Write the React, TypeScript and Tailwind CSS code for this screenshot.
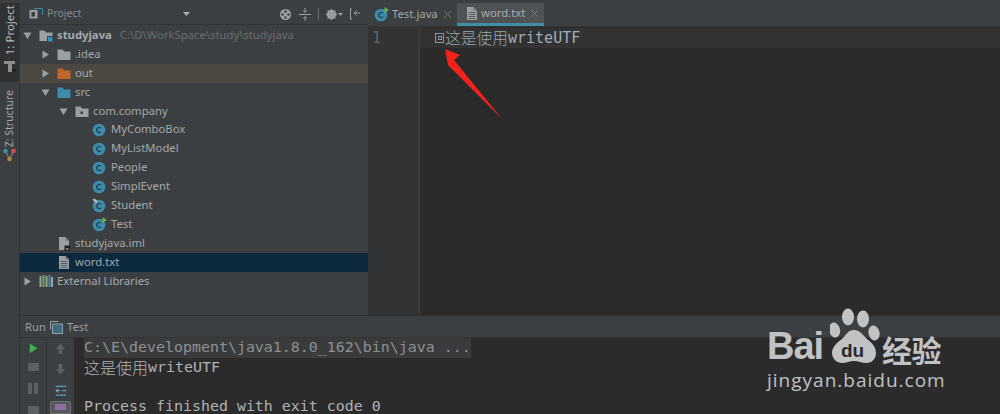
import React from "react";

const UI = { fontFamily: '"Noto Sans", "Open Sans", sans-serif' };
const MONO = { fontFamily: '"DejaVu Sans Mono", "Noto Sans CJK SC", monospace' };
const CJK = { fontFamily: '"Noto Sans CJK SC", sans-serif' };

function Arrow({ open }: { open?: boolean }) {
  return (
    <svg width="9" height="9" viewBox="0 0 9 9" className="shrink-0">
      {open ? <polygon points="0.5,1.5 8.5,1.5 4.5,8" fill="#9da0a2" /> : <polygon points="1.5,0.5 8,4.5 1.5,8.5" fill="#9da0a2" />}
    </svg>
  );
}

function Folder({ color, dot, badge }: { color: string; dot?: boolean; badge?: boolean }) {
  return (
    <svg width="14" height="13" viewBox="0 0 14 13" className="shrink-0">
      <path d="M0.5 1.5h5l1.5 2h6.5v8.5h-13z" fill={color} />
      {dot && <rect x="5.5" y="6.5" width="2.5" height="2.5" fill="#3c3f41" />}
      {badge && <rect x="8.5" y="7.5" width="5.5" height="5.5" fill="#3592c4" stroke="#3c3f41" />}
    </svg>
  );
}

function ClassIcon({ pin, run }: { pin?: boolean; run?: boolean }) {
  return (
    <svg width="15" height="15" viewBox="0 0 15 15" className="shrink-0">
      <circle cx="7" cy="8" r="6.3" fill="#3e8cab" />
      <path d="M9 6.2a2.5 2.5 0 1 0 0 3.6" fill="none" stroke="#1f4757" strokeWidth="1.3" />
      {pin && <path d="M0.5 1.5l2-1 3.5 3-2 2z" fill="#b4b8ba" />}
      {run && <polygon points="10.5,0 15,3 10.5,6" fill="#6ab04a" />}
    </svg>
  );
}

function FileIcon({ badge }: { badge?: boolean }) {
  return (
    <svg width="12" height="15" viewBox="0 0 12 15" className="shrink-0">
      <path d="M1 1h6.5l3.5 3.5V14H1z" fill="#9aa0a4" />
      <path d="M7.5 1v3.5H11" fill="#6f7579" />
      {!badge && <path d="M2.5 6.5h7M2.5 8.5h7M2.5 10.5h7M2.5 12.5h7" stroke="#50565a" strokeWidth="0.9" />}
      {badge && <rect x="6.5" y="9.5" width="5.5" height="5.5" fill="#222" />}
      {badge && <rect x="8" y="12.5" width="2.5" height="1" fill="#ddd" />}
    </svg>
  );
}

function Row({ indent, arrow, icon, label, extra, bold, className }: {
  indent: number; arrow?: "open" | "closed"; icon: React.ReactNode; label: string; extra?: string; bold?: boolean; className?: string;
}) {
  return (
    <div className={`flex h-[18.9px] items-center ${className ?? ""}`}>
      <div className="flex w-[14px] shrink-0 justify-center" style={{ marginLeft: indent }}>
        {arrow && <Arrow open={arrow === "open"} />}
      </div>
      <div className="ml-[4px] flex w-[15px] shrink-0 justify-center">{icon}</div>
      <span className={`ml-[4px] text-[11.3px] whitespace-nowrap text-[#a3a9ac] ${bold ? "font-bold" : ""}`}>{label}</span>
      {extra && <span className="ml-[8px] text-[11.3px] whitespace-nowrap text-[#696e71]">{extra}</span>}
    </div>
  );
}

function Rail() {
  return (
    <div className="flex w-[20px] shrink-0 flex-col border-r border-[#323436] bg-[#3c3f41]" style={UI}>
      <div className="flex h-[79px] w-[19px] flex-col items-center justify-end bg-[#2f3133] pb-[10px]">
        <span className="text-[11.5px] leading-[19px] whitespace-nowrap text-[#b5b8ba] [writing-mode:vertical-rl] rotate-180">1: Project</span>
        <svg width="12" height="12" viewBox="0 0 12 12" className="mt-[5px]">
          <path d="M0 1h11v3H8v8H4V4H0z" fill="#8a8e91" />
          <rect x="8" y="9" width="4" height="3" fill="#222" />
        </svg>
      </div>
      <div className="mt-[8px] flex w-[19px] flex-col items-center">
        <span className="text-[10.5px] leading-[19px] whitespace-nowrap text-[#a3a7a9] [writing-mode:vertical-rl] rotate-180">Z: Structure</span>
        <svg width="13" height="14" viewBox="0 0 13 14" className="mt-[1px]">
          <path d="M2.5 3L6.5 11L10.5 3" stroke="#8a8e91" fill="none" />
          <circle cx="2.5" cy="3" r="2.3" fill="#3e8cab" />
          <circle cx="10.5" cy="3" r="2.3" fill="#c75450" />
          <circle cx="6.5" cy="11" r="2.3" fill="#b5803c" />
        </svg>
      </div>
    </div>
  );
}

function ProjectPanel() {
  return (
    <div className="flex w-[348px] shrink-0 flex-col bg-[#3c3f41]" style={UI}>
      <div className="flex h-[22px] items-center border-b border-[#323436] pl-[9px] pt-[1px]">
        <svg width="14" height="12" viewBox="0 0 14 12">
          <rect x="0.5" y="2" width="8" height="8.5" fill="#9aa0a4" />
          <rect x="2.5" y="4" width="3.5" height="4.5" fill="#3c3f41" />
          <path d="M5 0.5h8.5V7" stroke="#3e8cab" fill="none" />
        </svg>
        <span className="ml-[4px] text-[10.5px] text-[#888c8f]">Project</span>
        <svg width="7" height="4" viewBox="0 0 7 4" className="ml-[102px]"><polygon points="0,0 7,0 3.5,4" fill="#a9adaf" /></svg>
        <div className="ml-[89px] flex items-center">
          <svg width="13" height="13" viewBox="0 0 13 13">
            <circle cx="6.5" cy="6.5" r="5.5" fill="#9da0a2" />
            <circle cx="6.5" cy="3.5" r="1.2" fill="#3c3f41" /><circle cx="6.5" cy="9.5" r="1.2" fill="#3c3f41" />
            <circle cx="3.5" cy="6.5" r="1.2" fill="#3c3f41" /><circle cx="9.5" cy="6.5" r="1.2" fill="#3c3f41" />
          </svg>
          <svg width="12" height="13" viewBox="0 0 12 13" className="ml-[7px]">
            <path d="M0 6.5h12" stroke="#9da0a2" /><path d="M6 0v4M6 9v4M4 2.5l2 2 2-2M4 10.5l2-2 2 2" stroke="#9da0a2" fill="none" />
          </svg>
          <div className="ml-[7px] h-[12px] w-px bg-[#6a6d70]" />
          <svg width="11" height="11" viewBox="0 0 11 11" className="ml-[7px]">
            <circle cx="5.5" cy="5.5" r="3.4" fill="none" stroke="#9da0a2" strokeWidth="2.4" />
            <path d="M5.5 0v11M0 5.5h11M1.6 1.6l7.8 7.8M9.4 1.6l-7.8 7.8" stroke="#9da0a2" strokeWidth="1.4" />
          </svg>
          <svg width="5" height="3" viewBox="0 0 5 3" className="ml-[1px]"><polygon points="0,0 5,0 2.5,3" fill="#9da0a2" /></svg>
          <svg width="12" height="12" viewBox="0 0 12 12" className="ml-[6px]">
            <path d="M1.5 1v10M1 1h2M1 11h2" stroke="#9da0a2" fill="none" /><path d="M11 5H5M7.5 2.5L5 5l2.5 2.5" stroke="#9da0a2" fill="none" />
          </svg>
        </div>
      </div>
      <div className="pt-[1px]">
        <Row indent={0} arrow="open" icon={<Folder color="#9aa0a4" badge />} label="studyjava" bold extra="C:\D\WorkSpace\study\studyjava" />
        <Row indent={18} arrow="closed" icon={<Folder color="#9aa0a4" />} label=".idea" />
        <Row indent={18} arrow="closed" icon={<Folder color="#c3662c" />} label="out" className="bg-[#4b4841]" />
        <Row indent={18} arrow="open" icon={<Folder color="#3e8cab" />} label="src" />
        <Row indent={36} arrow="open" icon={<Folder color="#9aa0a4" dot />} label="com.company" />
        <Row indent={54} icon={<ClassIcon />} label="MyComboBox" />
        <Row indent={54} icon={<ClassIcon />} label="MyListModel" />
        <Row indent={54} icon={<ClassIcon />} label="People" />
        <Row indent={54} icon={<ClassIcon />} label="SimplEvent" />
        <Row indent={54} icon={<ClassIcon pin />} label="Student" />
        <Row indent={54} icon={<ClassIcon run />} label="Test" />
        <Row indent={18} icon={<FileIcon badge />} label="studyjava.iml" />
        <Row indent={18} icon={<FileIcon />} label="word.txt" className="bg-[#0d293e]" />
        <Row indent={0} arrow="closed" label="External Libraries" icon={
          <svg width="14" height="12" viewBox="0 0 14 12">
            <rect x="0.5" y="1" width="2" height="11" fill="#9aa0a4" />
            <rect x="3.5" y="0" width="2" height="12" fill="#6ab04a" />
            <rect x="6.5" y="1" width="2" height="11" fill="#9aa0a4" />
            <rect x="9.5" y="0" width="2" height="12" fill="#3e8cab" />
            <rect x="12" y="2" width="2" height="10" fill="#9aa0a4" />
          </svg>
        } />
      </div>
    </div>
  );
}

function Tab({ active, icon, label, width, inset }: { active?: boolean; icon: React.ReactNode; label: string; width: number; inset: number }) {
  return (
    <div className={`flex h-[23px] items-center ${active ? "border-b-[3px] border-[#3f8ea6] bg-[#4e5254]" : ""}`} style={{ ...UI, width, paddingLeft: inset }}>
      {icon}
      <span className={`ml-[3px] text-[11.3px] whitespace-nowrap ${active ? "text-[#a9adb0]" : "text-[#a3a7a9]"}`}>{label}</span>
      <svg width="7" height="7" viewBox="0 0 7 7" className="ml-[6px]"><path d="M0 0l7 7M7 0L0 7" stroke="#74787b" /></svg>
    </div>
  );
}

function Editor() {
  return (
    <div className="flex min-w-0 flex-1 flex-col bg-[#2b2b2b]">
      <div className="flex h-[24px] items-end border-b border-[#323436] bg-[#3c3f41] pl-[5px]">
        <Tab width={84} inset={1} label="Test.java" icon={<ClassIcon run />} />
        <Tab active width={87} inset={9} label="word.txt" icon={<FileIcon />} />
      </div>
      <div className="flex flex-1">
        <div className="w-[52px] shrink-0 border-r border-[#3f4143] bg-[#313335] pl-[4px] pt-[1px] text-[15px] leading-[20px] text-[#606366]" style={MONO}>1</div>
        <div className="flex-1 pt-[1px]">
          <div className="flex h-[20px] items-center bg-[#323232] pl-[15px] text-[15px] leading-[20px] whitespace-nowrap text-[#9fadba]" style={MONO}>
            <span className="mr-[1px] flex h-[10px] w-[9px] items-center justify-center border border-[#8a97a3]"><span className="h-[4px] w-[4px] border border-[#8a97a3]" /></span>
            <span className="text-[15.75px] font-light text-[#98a5b1]" style={CJK}>这是使用</span>
            <span>writeUTF</span>
          </div>
        </div>
      </div>
    </div>
  );
}

function RunPanel() {
  return (
    <div className="flex h-[99px] shrink-0 flex-col border-t border-[#2d2f30] bg-[#3c3f41]">
      <div className="flex h-[22px] shrink-0 items-center border-b border-[#323436] pl-[5px] pt-[1px]" style={UI}>
        <span className="text-[11.3px] text-[#9a9ea1]">Run</span>
        <svg width="13" height="13" viewBox="0 0 13 13" className="ml-[4px]">
          <path d="M0.5 0.5h8" stroke="#9aa0a4" /><path d="M0.5 0.5v8" stroke="#9aa0a4" />
          <rect x="2.5" y="3" width="10" height="9.5" fill="#3e6b80" stroke="#8fa0aa" />
        </svg>
        <span className="ml-[4px] text-[11.3px] text-[#9a9ea1]">Test</span>
      </div>
      <div className="flex min-h-0 flex-1">
        <div className="flex w-[27px] shrink-0 flex-col items-center border-r border-[#323436] pt-[5px]">
          <svg width="11" height="14" viewBox="0 0 11 14"><polygon points="0.5,0.5 10.5,7 0.5,13.5" fill="#3fb34f" /></svg>
          <div className="mt-[9px] h-[11px] w-[11px] bg-[#5e6163]" />
          <div className="mt-[12px] flex gap-[2px]"><div className="h-[11px] w-[4px] bg-[#5e6163]" /><div className="h-[11px] w-[4px] bg-[#5e6163]" /></div>
          <div className="mt-[12px] h-[11px] w-[11px] bg-[#5e6163]" />
        </div>
        <div className="flex w-[27px] shrink-0 flex-col items-center pt-[6px]">
          <svg width="11" height="12" viewBox="0 0 11 12"><path d="M5.5 0L11 6H7.5v6h-4V6H0z" fill="#5e6163" /></svg>
          <svg width="11" height="12" viewBox="0 0 11 12" className="mt-[10px]"><path d="M5.5 12L11 6H7.5V0h-4v6H0z" fill="#5e6163" /></svg>
          <svg width="14" height="13" viewBox="0 0 14 13" className="mt-[10px]">
            <path d="M1 1.5h12M1 6.5h5M8 6.5h5M1 11.5h12" stroke="#4f9ec4" strokeWidth="1.4" />
            <path d="M4 4.5L1.5 6.5 4 8.5" stroke="#b0b4b6" fill="none" />
          </svg>
          <div className="mt-[5px] flex h-[14px] w-[21px] justify-center rounded-t-[2px] border border-[#6d7073] bg-[#55585a] pt-[2px]"><div className="h-[6px] w-[11px] bg-[#8f6fa8]" /></div>
        </div>
        <div className="min-w-0 flex-1 bg-[#2b2b2b] pl-[10px] text-[14.95px] leading-[19.7px] whitespace-pre text-[#b0b3b5]" style={MONO}>
          <div className="w-max bg-[#3a3b3c] text-[#8d9194]">{"C:\\E\\development\\java1.8.0_162\\bin\\java ..."}</div>
          <div className="flex h-[19.7px] items-center"><span className="text-[16px] font-light" style={CJK}>这是使用</span><span>writeUTF</span></div>
          <div className="h-[19.7px]" />
          <div>Process finished with exit code 0</div>
        </div>
      </div>
    </div>
  );
}

function Watermark() {
  return (
    <div className="absolute left-[767px] top-[307px] text-[#c0c2c3]" style={UI}>
      <div className="relative h-[63px] w-[180px]">
        <span className="absolute left-[0px] top-[15px] text-[38px] leading-[48px] font-bold tracking-[-1px]" style={{ fontFamily: '"Liberation Sans", sans-serif' }}>Bai</span>
        <svg width="50" height="58" viewBox="0 0 50 58" className="absolute left-[63px] top-[0px]">
          <ellipse cx="18" cy="10" rx="6" ry="8.5" fill="#c0c2c3" />
          <ellipse cx="33" cy="12" rx="6" ry="8.5" fill="#c0c2c3" />
          <ellipse cx="4.5" cy="23" rx="5.5" ry="7.5" fill="#c0c2c3" transform="rotate(-15 4.5 23)" />
          <ellipse cx="44" cy="26" rx="5.5" ry="7.5" fill="#c0c2c3" transform="rotate(-15 44 26)" />
          <path d="M24 23c-6 0-8 5-12 9-6 4-10 9-10 14 0 6 5 10 10 10 4 0 8-2 12-2s8 2 12 2c6 0 10-4 10-10 0-6-4-10-9-14-4-4-7-9-13-9z" fill="#c0c2c3" />
        </svg>
        <span className="absolute left-[74px] top-[33px] text-[19px] leading-[22px] font-bold text-[#2b2b2b]" style={{ fontFamily: '"Liberation Sans", sans-serif' }}>du</span>
        <span className="absolute left-[115px] top-[28px] text-[30px] leading-[28px] font-bold tracking-[-0.5px]" style={CJK}>经验</span>
      </div>
      <div className="text-[19px] leading-[20px] tracking-[1px] whitespace-nowrap" style={{ fontFamily: '"Open Sans", sans-serif' }}>jingyan.baidu.com</div>
    </div>
  );
}

export default function App() {
  return (
    <div className="relative flex h-[414px] w-[1000px] flex-col overflow-hidden bg-[#3c3f41] pt-[3px]">
      <div className="flex min-h-0 flex-1">
        <Rail />
        <div className="flex min-w-0 flex-1 flex-col">
          <div className="flex min-h-0 flex-1">
            <ProjectPanel />
            <Editor />
          </div>
          <RunPanel />
        </div>
      </div>
      <svg width="70" height="85" viewBox="0 0 70 85" className="absolute left-[440px] top-[42px]">
        <polygon points="5,7 20,13 14,18 62,77 8,23" fill="#f5221b" />
      </svg>
      <Watermark />
    </div>
  );
}
